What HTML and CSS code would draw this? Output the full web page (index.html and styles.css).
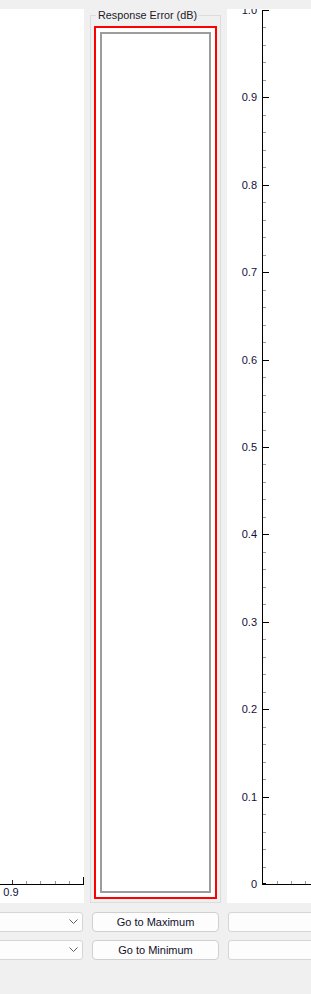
FILE: index.html
```html
<!DOCTYPE html>
<html>
<head>
<meta charset="utf-8">
<link rel="stylesheet" href="styles.css">
</head>
<body>
<div class="app">
  <div class="panels">
    <div class="plot">
      <svg class="chart" width="84" height="894" viewBox="0 0 84 894">
        <path class="axis" d="M0 875.5H84M83.5 868V876"/>
        <path class="tick-major" d="M12.5 871V875"/>
        <path class="tick-minor" d="M26.5 872V875M40.5 872V875M55.5 872V875M69.5 872V875"/>
        <text x="11" y="887" text-anchor="middle" class="lbl">0.9</text>
      </svg>
    </div>
    <fieldset class="group">
      <legend>Response Error (dB)</legend>
      <div class="frame"><div class="inner"></div></div>
    </fieldset>
    <div class="plot">
      <svg class="chart" width="84" height="894" viewBox="0 0 84 894">
        <path class="axis" d="M35.5 1V876M35 875.5H84M36 874.5H39"/>
        <path class="axis" d="M36 1.5h6M36 88.5h6M36 176.5h6M36 263.5h6M36 351.5h6M36 438.5h6M36 525.5h6M36 613.5h6M36 700.5h6M36 788.5h6M36 875.5h6"/>
        <path class="tick-minor" d="M36 18.5h3M36 36.5h3M36 53.5h3M36 71.5h3M36 106.5h3M36 123.5h3M36 141.5h3M36 158.5h3M36 193.5h3M36 211.5h3M36 228.5h3M36 246.5h3M36 281.5h3M36 298.5h3M36 316.5h3M36 333.5h3M36 368.5h3M36 386.5h3M36 403.5h3M36 421.5h3M36 455.5h3M36 473.5h3M36 490.5h3M36 508.5h3M36 543.5h3M36 560.5h3M36 578.5h3M36 595.5h3M36 630.5h3M36 648.5h3M36 665.5h3M36 683.5h3M36 718.5h3M36 735.5h3M36 753.5h3M36 770.5h3M36 805.5h3M36 823.5h3M36 840.5h3M36 858.5h3"/>
        <path class="tick-minor" d="M50.5 872V875M64.5 872V875M78.5 872V875"/>
        <text x="30" y="5" text-anchor="end" class="lbl">1.0</text>
        <text x="30" y="92" text-anchor="end" class="lbl">0.9</text>
        <text x="30" y="180" text-anchor="end" class="lbl">0.8</text>
        <text x="30" y="267" text-anchor="end" class="lbl">0.7</text>
        <text x="30" y="355" text-anchor="end" class="lbl">0.6</text>
        <text x="30" y="442" text-anchor="end" class="lbl">0.5</text>
        <text x="30" y="529" text-anchor="end" class="lbl">0.4</text>
        <text x="30" y="617" text-anchor="end" class="lbl">0.3</text>
        <text x="30" y="704" text-anchor="end" class="lbl">0.2</text>
        <text x="30" y="792" text-anchor="end" class="lbl">0.1</text>
        <text x="30" y="879" text-anchor="end" class="lbl">0</text>
      </svg>
    </div>
  </div>
  <div class="controls">
    <div class="combo"><svg width="9" height="6" viewBox="0 0 9 6"><polyline points="0.5,0.5 4.5,4.5 8.5,0.5" class="chev"/></svg></div>
    <button class="btn">Go to Maximum</button>
    <div class="field"></div>
    <div class="combo"><svg width="9" height="6" viewBox="0 0 9 6"><polyline points="0.5,0.5 4.5,4.5 8.5,0.5" class="chev"/></svg></div>
    <button class="btn">Go to Minimum</button>
    <div class="field"></div>
  </div>
</div>
</body>
</html>
```
FILE: styles.css
```css
html, body {
  margin: 0;
  padding: 0;
}
body {
  background: #f0f0f0;
  font-family: "Liberation Sans", Arial, sans-serif;
  width: 311px;
  height: 994px;
  overflow: hidden;
  color: #000;
}
.app {
  padding-top: 9px;
}
.panels {
  display: grid;
  grid-template-columns: 84px 131px 84px;
  column-gap: 6px;
  height: 894px;
}
.plot {
  background: #fff;
  overflow: hidden;
}
.chart {
  display: block;
}
.axis {
  fill: none;
  stroke: #000;
  stroke-width: 1;
}
.tick-major {
  fill: none;
  stroke: #333;
  stroke-width: 1;
}
.tick-minor {
  fill: none;
  stroke: #9a9a9a;
  stroke-width: 1;
}
.lbl {
  font-family: "Liberation Sans", Arial, sans-serif;
  font-size: 11px;
  fill: #10103a;
}
.group {
  margin: 0;
  padding: 0 3px 3px 3px;
  border: 1px solid #dcdcdc;
  min-width: 0;
  display: flex;
  flex-direction: column;
  box-sizing: border-box;
  height: 894px;
}
.group legend {
  font-size: 10.8px;
  line-height: 13px;
  padding: 0 2px;
  margin-left: 2px;
  color: #1a1a2a;
}
.frame {
  margin-top: 4px;
  flex: 1;
  border: 2px solid #ff0000;
  padding: 4px;
  background: #fff;
  box-sizing: border-box;
  display: flex;
}
.inner {
  flex: 1;
  border: 2px solid #9c9c9c;
  background: #fff;
}
.controls {
  margin-top: 9px;
  display: grid;
  grid-template-columns: 84px 131px 84px;
  column-gap: 6px;
  row-gap: 8px;
  grid-auto-rows: 20px;
}
.combo {
  margin-left: -6px;
  margin-right: 1px;
  border: 1px solid #d6d6d6;
  border-radius: 3px;
  background: #fdfdfd;
  display: flex;
  align-items: center;
  justify-content: flex-end;
  padding-right: 4px;
}
.combo svg {
  display: block;
}
.chev {
  fill: none;
  stroke: #606060;
  stroke-width: 1;
}
.btn {
  margin: 0 2px;
  border: 1px solid #d0d0d0;
  border-radius: 4px;
  background: #fdfdfd;
  font-family: "Liberation Sans", Arial, sans-serif;
  font-size: 11px;
  color: #10102a;
  padding: 0;
  line-height: 18px;
}
.field {
  margin-left: 1px;
  margin-right: -6px;
  border: 1px solid #d6d6d6;
  border-radius: 3px;
  background: #fdfdfd;
}
```
